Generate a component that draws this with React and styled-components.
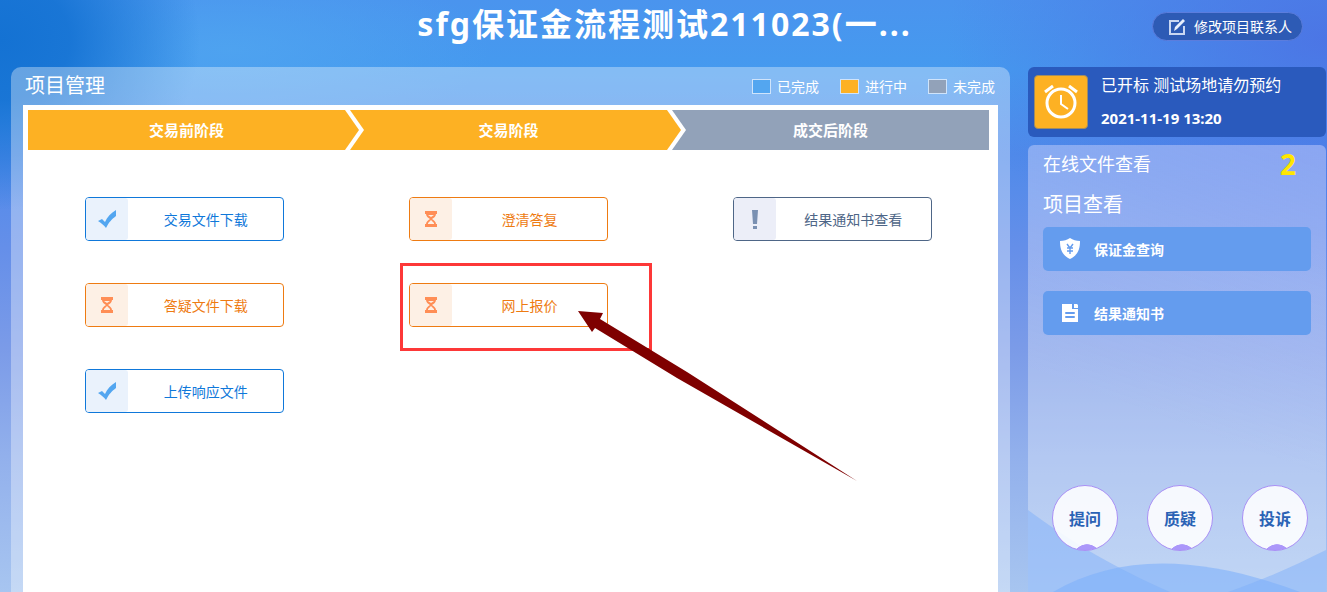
import styled, { createGlobalStyle } from "styled-components";

const GlobalStyle = createGlobalStyle`
	*,
	*::before,
	*::after {
		box-sizing: border-box;
	}
	body {
		margin: 0;
		font-family: "Noto Sans", "Noto Sans CJK SC", sans-serif;
	}
	button {
		font-family: inherit;
		cursor: pointer;
	}
`;

const colors = {
	done: { main: "#0f78da", light: "#eaf2fc", icon: "#53a6f0" },
	doing: { main: "#ee7b12", light: "#fdf0e5", icon: "#ff8e56" },
	todo: { main: "#4e6687", light: "#eceef8", icon: "#7a90b2" },
};

const Page = styled.div`
	min-height: 100vh;
	display: flex;
	flex-direction: column;
	background:
		radial-gradient(ellipse 200px 170px at 0 40px, #1472d3 0%, rgba(20, 114, 211, 0.9) 35%, rgba(20, 114, 211, 0) 100%),
		radial-gradient(ellipse 380px 240px at 100% 40px, rgba(76, 114, 228, 0.9) 0%, rgba(76, 114, 228, 0) 100%),
		radial-gradient(ellipse 260px 90px at 230px 50px, rgba(80, 165, 240, 0.8) 0%, rgba(80, 165, 240, 0) 100%),
		linear-gradient(180deg, #4a94ee 0%, #459aef 12%, #4f8aea 26%, #658fe9 42%, #7b9be8 59%, #92b0ec 77%, #a7c5f0 100%);
`;

const Header = styled.header`
	height: 67px;
	display: grid;
	grid-template-columns: 1fr auto 1fr;
	align-items: start;
	padding: 0 24px 0 26px;
`;

const Title = styled.h1`
	grid-column: 2;
	margin: 0;
	color: #fff;
	font-size: 32px;
	line-height: 48px;
	letter-spacing: 2px;
	white-space: nowrap;
`;

const EditButton = styled.button`
	justify-self: end;
	display: flex;
	align-items: center;
	gap: 8px;
	height: 29px;
	margin-top: 12px;
	padding: 0 10px 0 15px;
	border: 1px solid #5b7ddd;
	border-radius: 15px;
	background: #2d5bb5;
	color: #fff;
	font-size: 14px;
	line-height: 26px;
`;

const Body = styled.div`
	flex: 1;
	display: flex;
	gap: 18px;
	padding: 0 1px 0 11px;
`;

const Main = styled.main`
	flex: 1;
	display: flex;
	flex-direction: column;
	padding: 0 12px;
	border-radius: 10px 10px 0 0;
	background: rgba(255, 255, 255, 0.34);
`;

const MainHead = styled.div`
	display: flex;
	justify-content: space-between;
	align-items: center;
	height: 38px;
	padding: 0 3px 0 2px;
	color: #fff;
`;

const Heading = styled.h2`
	margin: 0;
	color: #fff;
	font-size: ${(props) => props.$size || 20}px;
	font-weight: 400;
	line-height: 28px;
`;

const Legend = styled.ul`
	display: flex;
	gap: 21px;
	margin: 0;
	padding: 0;
	list-style: none;
	font-size: 14px;
`;

const LegendItem = styled.li`
	display: flex;
	align-items: center;
	gap: 6px;
	&::before {
		content: "";
		width: 19px;
		height: 15px;
		border: 1px solid #cfe4fb;
		background: ${(props) => props.$color};
	}
`;

const Content = styled.div`
	flex: 1;
	padding: 5px 4px 0 0;
	background: #fff;
`;

const Steps = styled.ol`
	display: flex;
	gap: 5px;
	margin: 0 5px;
	padding: 0;
	list-style: none;
`;

const Step = styled.li`
	position: relative;
	flex: 1;
	height: 40px;
	background: ${(props) => props.$color};
	color: #fff;
	font-size: 15px;
	font-weight: bold;
	line-height: 40px;
	text-align: center;
	&:not(:first-child)::before {
		content: "";
		position: absolute;
		top: 0;
		left: 0;
		width: 14px;
		height: 40px;
		background: #fff;
		clip-path: polygon(0 0, 100% 50%, 0 100%);
	}
	&:not(:last-child)::after {
		content: "";
		position: absolute;
		z-index: 1;
		top: 0;
		left: 100%;
		width: 14px;
		height: 40px;
		background: ${(props) => props.$color};
		clip-path: polygon(0 0, 100% 50%, 0 100%);
	}
`;

const Columns = styled.div`
	display: grid;
	grid-template-columns: repeat(3, 1fr);
	margin-top: 47px;
`;

const Column = styled.div`
	display: flex;
	flex-direction: column;
	align-items: center;
	gap: 42px;
`;

const TaskWrap = styled.div`
	position: relative;
`;

const TaskButton = styled.button`
	display: flex;
	align-items: stretch;
	width: 199px;
	height: 44px;
	padding: 0;
	border: 1px solid ${(props) => colors[props.$state].main};
	border-radius: 4px;
	background: #fff;
	color: ${(props) => colors[props.$state].main};
	font-size: 14px;
`;

const TaskIcon = styled.span`
	display: flex;
	align-items: center;
	justify-content: center;
	width: 42px;
	border-radius: 3px;
	background: ${(props) => colors[props.$state].light};
	color: ${(props) => colors[props.$state].icon};
`;

const TaskText = styled.span`
	flex: 1;
	align-self: center;
	text-align: center;
`;

const Mark = styled.div`
	position: absolute;
	top: -20px;
	left: -9px;
	width: 252px;
	height: 88px;
	border: 3px solid #fd3838;
	pointer-events: none;
`;

const Arrow = styled.svg`
	position: absolute;
	z-index: 2;
	top: 27px;
	left: 168px;
	pointer-events: none;
`;

const Side = styled.aside`
	width: 298px;
	display: flex;
	flex-direction: column;
	gap: 8px;
`;

const TimeCard = styled.section`
	display: flex;
	align-items: center;
	gap: 13px;
	height: 70px;
	padding: 0 6px;
	border-radius: 6px;
	background: #2a5abd;
	color: #fff;
`;

const ClockBox = styled.div`
	display: flex;
	align-items: center;
	justify-content: center;
	width: 54px;
	height: 54px;
	border: 1px solid #a08c62;
	border-radius: 4px;
	background: #fdb123;
`;

const TimeText = styled.div`
	font-size: 16px;
	line-height: 33px;
	strong {
		display: block;
		font-size: 15px;
	}
`;

const Panel = styled.section`
	position: relative;
	flex: 1;
	display: flex;
	flex-direction: column;
	padding: 5px 15px 41px;
	border-radius: 6px 6px 0 0;
	background: linear-gradient(200deg, rgba(160, 170, 250, 0.3) 0%, rgba(255, 255, 255, 0) 60%), rgba(255, 255, 255, 0.3);
`;

const Waves = styled.svg`
	position: absolute;
	left: 0;
	bottom: 0;
	width: 100%;
	height: 90px;
`;

const FileRow = styled.div`
	display: flex;
	justify-content: space-between;
	align-items: center;
	height: 28px;
	margin-bottom: 13px;
	padding-right: 15px;
`;

const Count = styled.strong`
	color: #ffe600;
	font-size: 28px;
	line-height: 28px;
`;

const SideList = styled.div`
	display: flex;
	flex-direction: column;
	gap: 20px;
	margin-top: 8px;
`;

const SideButton = styled.button`
	display: flex;
	align-items: center;
	gap: 14px;
	height: 44px;
	padding: 0 17px;
	border: 0;
	border-radius: 5px;
	background: #649cee;
	color: #fff;
	font-size: 14px;
	font-weight: bold;
`;

const Circles = styled.div`
	position: relative;
	display: flex;
	justify-content: center;
	gap: 29px;
	margin-top: auto;
	padding-left: 6px;
`;

const Circle = styled.button`
	width: 66px;
	height: 66px;
	padding: 0;
	border: 1px solid #a98ff5;
	border-radius: 50%;
	background: radial-gradient(circle 14px at 34px 72px, #ab97fa 96%, transparent 100%), rgba(255, 255, 255, 0.88);
	color: #2a62b5;
	font-size: 16px;
	font-weight: bold;
`;

function EditIcon() {
	return (
		<svg width="18" height="18" viewBox="0 0 18 18" fill="none" stroke="#c9d7f2" strokeWidth="2">
			<path d="M11 3H2v13h14V8" />
			<path d="M6 13l1-4 8-8 2 2-8 8z" fill="#e8effc" stroke="none" />
		</svg>
	);
}

function ClockIcon() {
	return (
		<svg width="34" height="36" viewBox="0 0 34 36" fill="none" stroke="#fff" strokeWidth="3">
			<circle cx="17" cy="19" r="14" />
			<path d="M17 11v9l7 5" strokeWidth="2" />
			<path d="M1 8l8-6M33 8l-8-6" />
		</svg>
	);
}

function StateIcon({ state }) {
	if (state === "done") {
		return (
			<svg width="18" height="18" viewBox="0 0 18 18" fill="currentColor">
				<path d="M0 11l4-2 3 3C9 7 13 3 18 0v6c-4 3-7 6-10 12C6 15 3 13 0 11z" />
			</svg>
		);
	}
	if (state === "doing") {
		return (
			<svg width="12" height="16" viewBox="0 0 12 16">
				<path d="M0 0h12v3h-1c0 2-2 4-4 5 2 1 4 3 4 5h1v3H0v-3h1c0-2 2-4 4-5-2-1-4-3-4-5H0z" fill="currentColor" />
				<path d="M3 4h6L6 6zM6 9l3 3v1H3v-1z" fill="#fdf0e5" />
			</svg>
		);
	}
	return (
		<svg width="6" height="19" viewBox="0 0 6 19" fill="currentColor">
			<path d="M0 0h6L5 14H1zM1 16h4v3H1z" />
		</svg>
	);
}

function ShieldIcon() {
	return (
		<svg width="20" height="22" viewBox="0 0 20 22">
			<path d="M10 0c3 2 6 3 10 3 0 8-2 14-10 18C2 17 0 11 0 3c4 0 7-1 10-3z" fill="#fff" />
			<path d="M7 6l3 4 3-4M7 10h6M7 13h6M10 10v6" fill="none" stroke="#649cee" strokeWidth="1.4" />
		</svg>
	);
}

function FileIcon() {
	return (
		<svg width="20" height="18" viewBox="0 0 20 18">
			<path d="M2 0h10v5h6v13H2zM14 0h3l1 1v3h-4z" fill="#fff" />
			<path d="M6 9h8M6 13h8" stroke="#649cee" strokeWidth="2" strokeLinecap="round" />
		</svg>
	);
}

const tasks = [
	[
		{ text: "交易文件下载", state: "done" },
		{ text: "答疑文件下载", state: "doing" },
		{ text: "上传响应文件", state: "done" },
	],
	[
		{ text: "澄清答复", state: "doing" },
		{ text: "网上报价", state: "doing", marked: true },
	],
	[{ text: "结果通知书查看", state: "todo" }],
];

function Task({ text, state, marked }) {
	return (
		<TaskWrap>
			<TaskButton type="button" $state={state}>
				<TaskIcon $state={state}>
					<StateIcon state={state} />
				</TaskIcon>
				<TaskText>{text}</TaskText>
			</TaskButton>
			{marked && (
				<>
					<Mark />
					<Arrow width="282" height="174" viewBox="0 0 282 174">
						<path d="M1 1l25 2-3 6 87 53L280 171 100 68 18 18l-3 4z" fill="#7f0000" />
					</Arrow>
				</>
			)}
		</TaskWrap>
	);
}

export default function App() {
	return (
		<>
			<GlobalStyle />
			<Page>
				<Header>
					<Title>sfg保证金流程测试211023(一...</Title>
					<EditButton type="button">
						<EditIcon />
						修改项目联系人
					</EditButton>
				</Header>
				<Body>
					<Main>
						<MainHead>
							<Heading>项目管理</Heading>
							<Legend>
								<LegendItem $color="#53a6f0">已完成</LegendItem>
								<LegendItem $color="#fdb123">进行中</LegendItem>
								<LegendItem $color="#92a2b9">未完成</LegendItem>
							</Legend>
						</MainHead>
						<Content>
							<Steps>
								<Step $color="#fdb123">交易前阶段</Step>
								<Step $color="#fdb123">交易阶段</Step>
								<Step $color="#92a2b9">成交后阶段</Step>
							</Steps>
							<Columns>
								{tasks.map((list, i) => (
									<Column key={i}>
										{list.map((task) => (
											<Task key={task.text} {...task} />
										))}
									</Column>
								))}
							</Columns>
						</Content>
					</Main>
					<Side>
						<TimeCard>
							<ClockBox>
								<ClockIcon />
							</ClockBox>
							<TimeText>
								已开标 测试场地请勿预约
								<strong>2021-11-19 13:20</strong>
							</TimeText>
						</TimeCard>
						<Panel>
							<Waves viewBox="0 0 298 90" preserveAspectRatio="none">
								<path d="M0 8C40 38 85 65 142 90H0z" fill="#7fb0fa" fillOpacity="0.5" />
								<path d="M25 90C90 52 170 52 272 90z" fill="#7fb0fa" fillOpacity="0.6" />
								<path d="M200 90C235 78 270 62 298 48V90z" fill="#7fb0fa" fillOpacity="0.5" />
							</Waves>
							<FileRow>
								<Heading $size={18}>在线文件查看</Heading>
								<Count>2</Count>
							</FileRow>
							<Heading>项目查看</Heading>
							<SideList>
								<SideButton type="button">
									<ShieldIcon />
									保证金查询
								</SideButton>
								<SideButton type="button">
									<FileIcon />
									结果通知书
								</SideButton>
							</SideList>
							<Circles>
								<Circle type="button">提问</Circle>
								<Circle type="button">质疑</Circle>
								<Circle type="button">投诉</Circle>
							</Circles>
						</Panel>
					</Side>
				</Body>
			</Page>
		</>
	);
}
